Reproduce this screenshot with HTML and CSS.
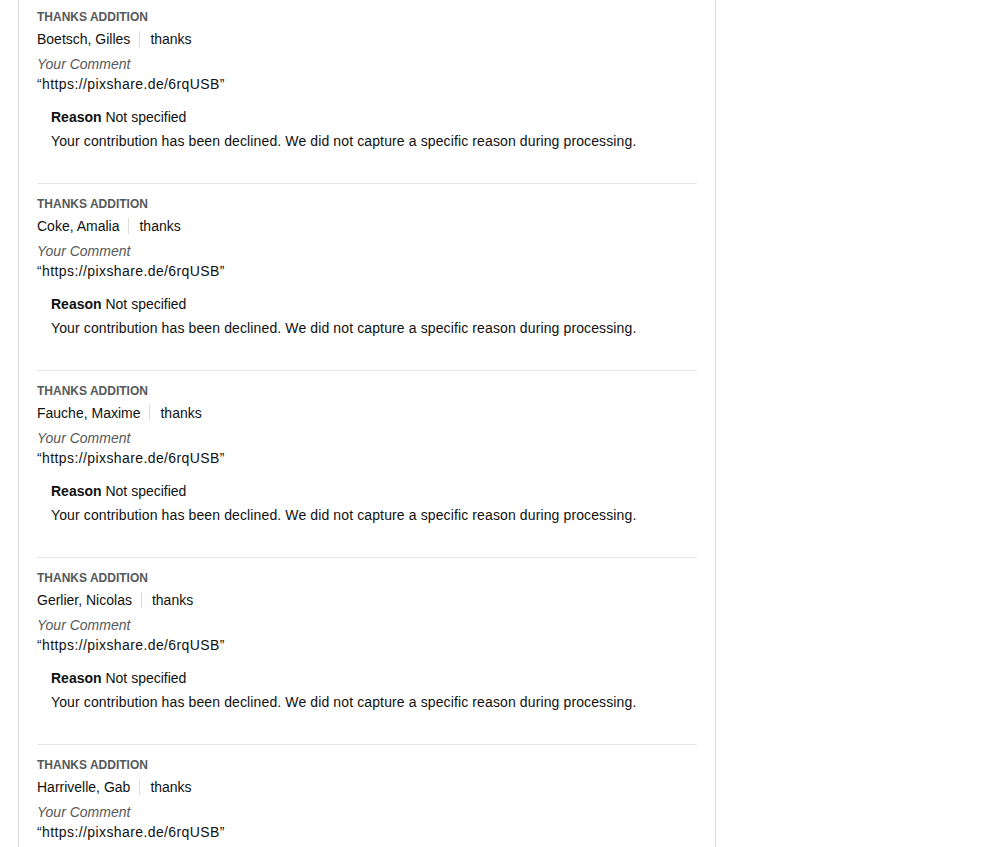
FILE: index.html
```html
<!DOCTYPE html>
<html lang="en">
<head>
  <meta charset="UTF-8">
  <meta name="viewport" content="width=device-width, initial-scale=1.0">
  <title>Contributions</title>
  <link rel="stylesheet" href="styles.css">
</head>
<body>
  <div class="panel">
    <div class="entry">
      <div class="entry-type">Thanks Addition</div>
      <div class="entry-name"><span class="person">Boetsch, Gilles</span><span class="role">thanks</span></div>
      <div class="comment-label">Your Comment</div>
      <div class="comment-text">“https://pixshare.de/6rqUSB”</div>
      <div class="reason">
        <div class="reason-title"><strong>Reason</strong> Not specified</div>
        <div class="reason-text">Your contribution has been declined. We did not capture a specific reason during processing.</div>
      </div>
    </div>

    <div class="entry">
      <div class="entry-type">Thanks Addition</div>
      <div class="entry-name"><span class="person">Coke, Amalia</span><span class="role">thanks</span></div>
      <div class="comment-label">Your Comment</div>
      <div class="comment-text">“https://pixshare.de/6rqUSB”</div>
      <div class="reason">
        <div class="reason-title"><strong>Reason</strong> Not specified</div>
        <div class="reason-text">Your contribution has been declined. We did not capture a specific reason during processing.</div>
      </div>
    </div>

    <div class="entry">
      <div class="entry-type">Thanks Addition</div>
      <div class="entry-name"><span class="person">Fauche, Maxime</span><span class="role">thanks</span></div>
      <div class="comment-label">Your Comment</div>
      <div class="comment-text">“https://pixshare.de/6rqUSB”</div>
      <div class="reason">
        <div class="reason-title"><strong>Reason</strong> Not specified</div>
        <div class="reason-text">Your contribution has been declined. We did not capture a specific reason during processing.</div>
      </div>
    </div>

    <div class="entry">
      <div class="entry-type">Thanks Addition</div>
      <div class="entry-name"><span class="person">Gerlier, Nicolas</span><span class="role">thanks</span></div>
      <div class="comment-label">Your Comment</div>
      <div class="comment-text">“https://pixshare.de/6rqUSB”</div>
      <div class="reason">
        <div class="reason-title"><strong>Reason</strong> Not specified</div>
        <div class="reason-text">Your contribution has been declined. We did not capture a specific reason during processing.</div>
      </div>
    </div>

    <div class="entry">
      <div class="entry-type">Thanks Addition</div>
      <div class="entry-name"><span class="person">Harrivelle, Gab</span><span class="role">thanks</span></div>
      <div class="comment-label">Your Comment</div>
      <div class="comment-text">“https://pixshare.de/6rqUSB”</div>
      <div class="reason">
        <div class="reason-title"><strong>Reason</strong> Not specified</div>
        <div class="reason-text">Your contribution has been declined. We did not capture a specific reason during processing.</div>
      </div>
    </div>
  </div>
</body>
</html>
```

FILE: styles.css
```css
* {
  box-sizing: border-box;
}

html, body {
  margin: 0;
  padding: 0;
}

body {
  font-family: 'Liberation Sans', Arial, sans-serif;
  font-size: 14px;
  line-height: 20px;
  color: #0f1111;
  background: #ffffff;
}

.panel {
  width: 698px;
  margin-left: 18px;
  padding: 0 18px;
  border-left: 1px solid #dddddd;
  border-right: 1px solid #dddddd;
  min-height: 100vh;
}

.entry {
  padding: 12px 0 32px;
  border-bottom: 1px solid #e7e7e7;
}

.entry:first-child {
  padding-top: 9px;
}

.entry:last-child {
  border-bottom: none;
}

.entry-type {
  font-size: 12px;
  line-height: 16px;
  font-weight: 700;
  color: #565959;
  text-transform: uppercase;
}

.entry-name {
  margin-top: 4px;
  display: flex;
  align-items: center;
}

.person {
  padding-right: 9px;
  border-right: 1px solid #dddddd;
  line-height: 16px;
}

.role {
  padding-left: 10px;
}

.comment-label {
  margin-top: 5px;
  font-style: italic;
  color: #565959;
}

.comment-text {
  letter-spacing: 0.4px;
}

.reason {
  margin-top: 13px;
  padding-left: 14px;
}

.reason-title strong {
  font-weight: 700;
}

.reason-text {
  margin-top: 4px;
  letter-spacing: 0.12px;
}
```
